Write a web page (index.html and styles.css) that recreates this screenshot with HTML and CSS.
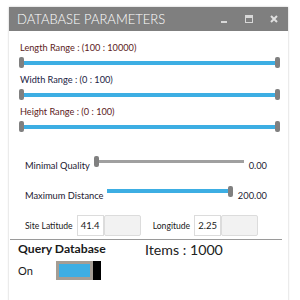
FILE: index.html
```html
<!DOCTYPE html>
<html lang="en">
<head>
    <meta charset="UTF-8">
    <title>Database Parameters</title>
    <link rel="stylesheet" href="styles.css">
</head>
<body>
    <div class="window">
        <div class="titlebar">
            <span class="title">DATABASE PARAMETERS</span>
            <div class="controls">
                <svg width="8" height="8" viewBox="0 0 8 8"><rect x="1" y="6" width="6" height="2" fill="#d8d8d8"/></svg>
                <svg width="8" height="8" viewBox="0 0 8 8"><rect x="0.5" y="0.5" width="7" height="7" fill="none" stroke="#d8d8d8"/><rect x="1" y="1" width="6" height="2" fill="#d8d8d8"/></svg>
                <svg width="8" height="8" viewBox="0 0 8 8"><path d="M1 1 L7 7 M7 1 L1 7" stroke="#e0e0e0" stroke-width="2"/></svg>
            </div>
        </div>

        <div class="content">
            <div class="range-group">
                <div class="range-label red">Length Range : (100 : 10000)</div>
                <div class="range">
                    <span class="thumb"></span><span class="track"></span><span class="thumb"></span>
                </div>
            </div>
            <div class="range-group">
                <div class="range-label navy">Width Range : (0 : 100)</div>
                <div class="range">
                    <span class="thumb"></span><span class="track"></span><span class="thumb"></span>
                </div>
            </div>
            <div class="range-group">
                <div class="range-label red">Height Range : (0 : 100)</div>
                <div class="range">
                    <span class="thumb"></span><span class="track"></span><span class="thumb"></span>
                </div>
            </div>

            <div class="param-row first">
                <span class="param-label">Minimal Quality</span>
                <div class="slider">
                    <span class="thumb"></span><span class="track gray"></span>
                </div>
                <span class="param-value">0.00</span>
            </div>
            <div class="param-row">
                <span class="param-label">Maximum Distance</span>
                <div class="slider">
                    <span class="track"></span><span class="thumb"></span>
                </div>
                <span class="param-value">200.00</span>
            </div>

            <div class="coords">
                <span class="coord-label">Site Latitude</span>
                <span class="coord-box">41.4</span>
                <span class="coord-spin"></span>
                <span class="coord-label second">Longitude</span>
                <span class="coord-box">2.25</span>
                <span class="coord-spin"></span>
            </div>
        </div>

        <div class="divider"></div>

        <div class="query">
            <div class="query-left">
                <div class="query-title">Query Database</div>
                <div class="toggle-row">
                    <span class="toggle-text">On</span>
                    <span class="toggle"><span class="toggle-fill"></span><span class="toggle-knob"></span></span>
                </div>
            </div>
            <div class="items">Items : 1000</div>
        </div>
    </div>
</body>
</html>
```

FILE: styles.css
```css
body {
    margin: 0;
    background-color: white;
    font-family: Lato, "Open Sans", sans-serif;
}
.window {
    margin: 7px 0 0 9px;
    width: 279px;
    height: 300px;
    background-color: white;
    box-shadow: 0 0 2px rgba(0, 0, 0, 0.25);
}
.titlebar {
    height: 24px;
    background-color: #7f7f7f;
    display: flex;
    align-items: center;
    padding: 0 10px 0 8px;
}
.title {
    color: white;
    font-size: 13px;
    font-weight: 300;
    flex: 1;
}
.controls {
    display: flex;
    gap: 17px;
    align-items: center;
}
.content {
    padding: 8px 8px 0 10px;
}
.range-group {
    margin-bottom: 2px;
}
.range-label {
    font-size: 9.2px;
    padding-left: 1px;
    height: 17px;
    line-height: 17px;
}
.red {
    color: #5c2222;
}
.navy {
    color: #1c2444;
}
.range {
    display: flex;
    align-items: center;
    height: 13px;
}
.thumb {
    width: 5px;
    height: 11px;
    background-color: #808080;
    border-radius: 2px;
    flex: none;
}
.track {
    flex: 1;
    height: 4px;
    background-color: #3daee3;
}
.track.gray {
    height: 3px;
    background-color: #a0a0a0;
}
.param-row {
    display: flex;
    align-items: center;
    padding: 0 13px 0 6px;
    height: 30px;
    font-size: 9.3px;
    color: #1c2030;
}
.param-row.first {
    margin-top: 17px;
}
.param-label {
    margin-right: 4px;
}
.slider {
    flex: 1;
    display: flex;
    align-items: center;
    height: 11px;
    margin-bottom: 8px;
}
.param-value {
    margin-left: 5px;
}
.coords {
    display: flex;
    align-items: center;
    padding-left: 6px;
    margin-top: 5px;
    font-size: 8.6px;
    color: #202020;
}
.coord-label {
    margin-right: 4px;
}
.coord-label.second {
    margin-left: 12px;
}
.coord-box {
    width: 22px;
    height: 19px;
    border: 1px solid #dcdcdc;
    padding-left: 3px;
    line-height: 19px;
    font-size: 9.5px;
}
.coord-spin {
    width: 35px;
    height: 19px;
    border: 1px solid #dcdcdc;
    border-radius: 2px;
    background-color: #f2f2f2;
}
.divider {
    height: 1px;
    background-color: #9a9a9a;
    margin: 3px 6px 0 1px;
}
.query {
    display: flex;
    padding-left: 9px;
}
.query-left {
    width: 127px;
}
.query-title {
    font-size: 12.2px;
    font-weight: 700;
    color: #1a1a1a;
    line-height: 17px;
}
.toggle-row {
    display: flex;
    align-items: center;
    margin-top: 4px;
}
.toggle-text {
    font-size: 11px;
    color: #1a1a1a;
    width: 38px;
}
.toggle {
    display: flex;
    height: 19px;
}
.toggle-fill {
    width: 31px;
    height: 13px;
    border: 3px solid #a59d94;
    background-color: #3daee3;
}
.toggle-knob {
    width: 8px;
    background-color: black;
}
.items {
    font-size: 14.2px;
    color: #222;
    margin-top: 1px;
}
```
